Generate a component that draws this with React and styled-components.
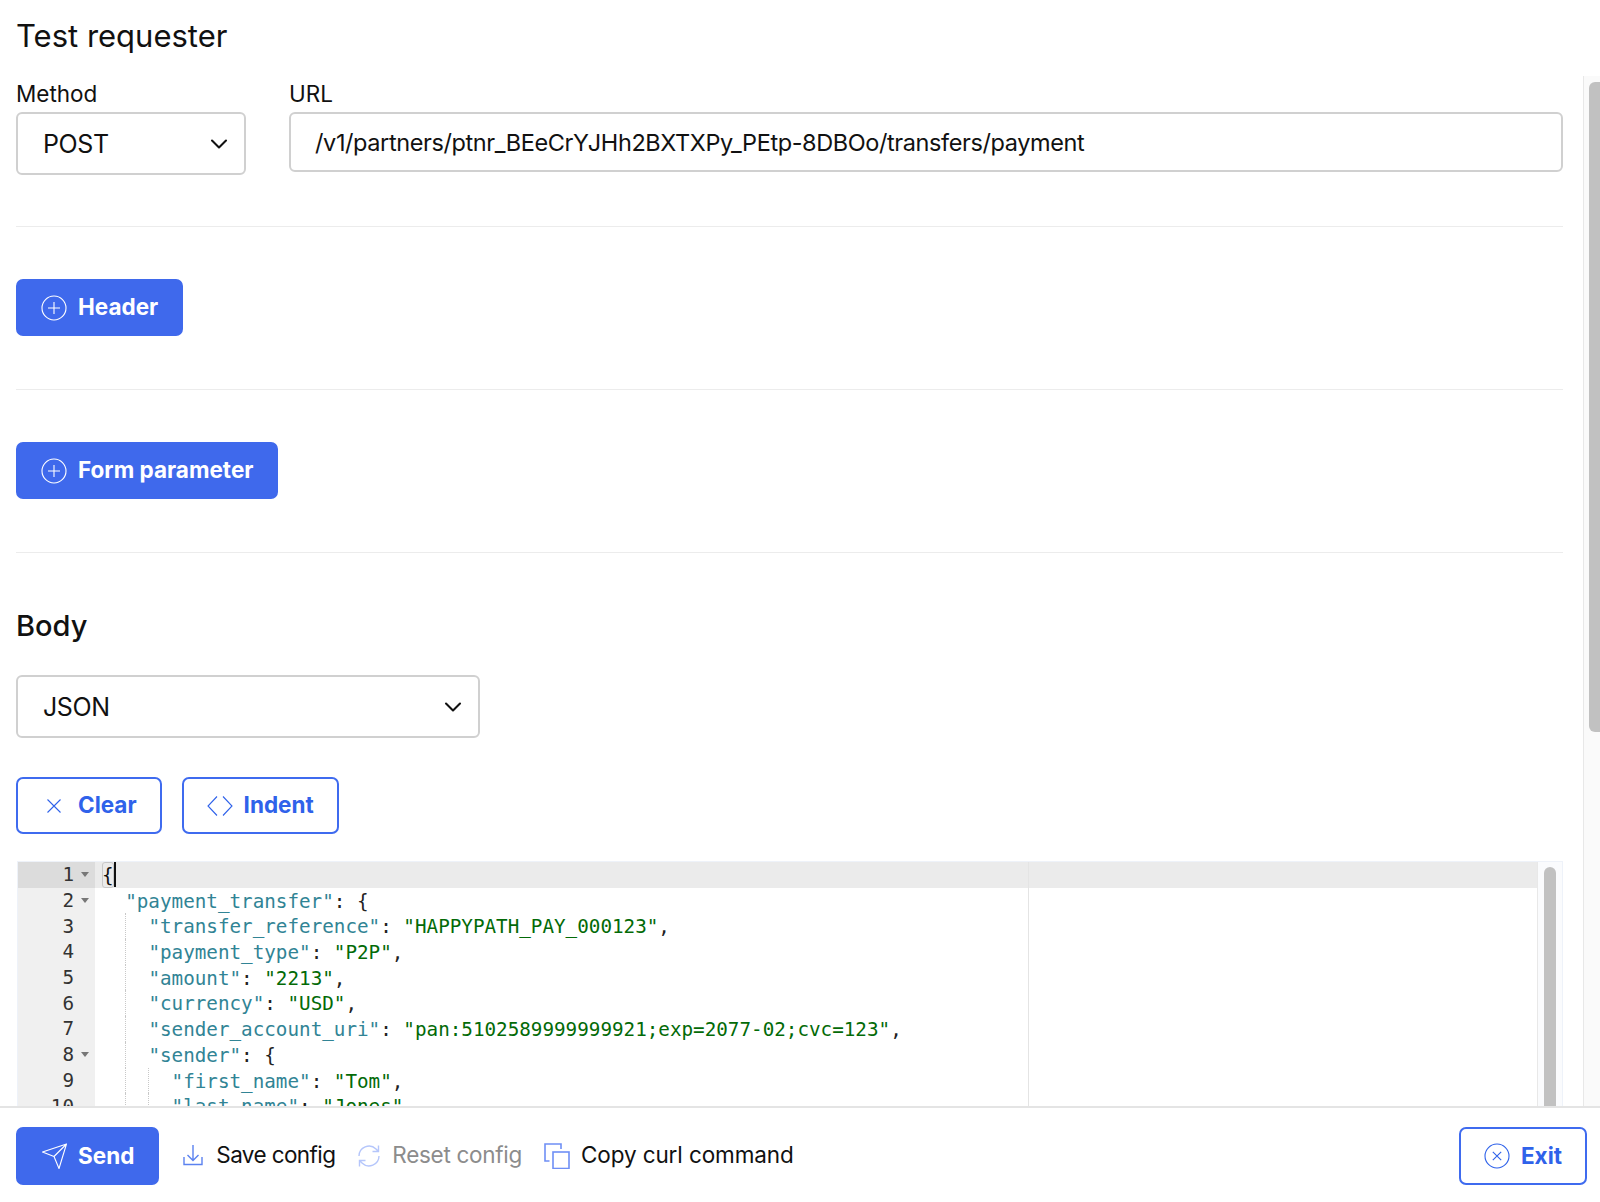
import React from 'react'
import styled, { createGlobalStyle } from 'styled-components'
import { ChevronDown } from 'lucide-react'

const GlobalStyle = createGlobalStyle`
  html, body {
    margin: 0;
    padding: 0;
    background: #fff;
    overflow: hidden;
  }
  * {
    box-sizing: border-box;
  }
`

const Page = styled.div`
  display: flex;
  flex-direction: column;
  width: 1600px;
  height: 1202px;
  overflow: hidden;
  font-family: 'Inter', 'Liberation Sans', sans-serif;
  color: #111;
`
const Title = styled.h1`
  height: 76px;
  margin: 0;
  padding: 17px 0 0 16px;
  font-size: 31px;
  line-height: 38px;
  font-weight: 400;
`
const Middle = styled.div`
  display: flex;
  flex: 1;
  min-height: 0;
`
const Content = styled.main`
  flex: 1;
  min-width: 0;
  overflow: hidden;
  padding: 0 20px 0 16px;
`
const PageScroll = styled.div`
  width: 17px;
  padding: 6px 0 0 5px;
  background: #fafafa;
  border-left: 1px solid #e8e8e8;
`
const PageThumb = styled.div`
  width: 11px;
  height: 650px;
  background: #c1c1c1;
  border-radius: 6px 0 0 6px;
`
const TopRow = styled.div`
  display: flex;
  gap: 43px;
`
const Field = styled.div`
  display: flex;
  flex-direction: column;
  flex: ${(p) => (p.$grow ? 1 : 'none')};
`
const Label = styled.label`
  height: 36px;
  padding-top: 4px;
  font-size: 22.5px;
  line-height: 28px;
`
const SelectBox = styled.div`
  display: flex;
  align-items: center;
  justify-content: space-between;
  width: ${(p) => p.$width}px;
  height: 63px;
  padding: 1px 11px 0 25px;
  border: 2px solid #d0d0d0;
  border-radius: 6px;
  font-size: 25px;
  letter-spacing: -0.4px;
`
const UrlInput = styled.div`
  display: flex;
  align-items: center;
  height: 60px;
  padding: 0 24px;
  border: 2px solid #d0d0d0;
  border-radius: 6px;
  font-size: 23.5px;
  letter-spacing: -0.4px;
`
const Divider = styled.hr`
  height: 1px;
  margin: ${(p) => p.$top}px 0 0;
  border: 0;
  background: #ececec;
`
const Button = styled.button`
  display: inline-flex;
  align-items: center;
  gap: 11px;
  height: 57px;
  padding: 0 23px 2px 23px;
  border: 2px solid ${(p) => (p.$outline ? '#3f6bef' : '#3f69ec')};
  border-radius: 7px;
  background: ${(p) => (p.$outline ? '#fff' : '#3f69ec')};
  color: ${(p) => (p.$outline ? '#2f62ea' : '#fff')};
  font-family: inherit;
  font-size: 22.5px;
  font-weight: 700;
  svg {
    position: relative;
    top: 1px;
  }
`
const FooterButton = styled(Button)`
  height: 58px;
  margin-top: 2px;
`
const AddBlock = styled.div`
  padding-top: 52px;
`
const BodyTitle = styled.h2`
  margin: 56px 0 0;
  font-size: 29px;
  line-height: 34px;
  font-weight: 500;
`
const BodySelect = styled.div`
  margin-top: 32px;
`
const EditorActions = styled.div`
  display: flex;
  gap: 20px;
  margin-top: 39px;
`
const Editor = styled.div`
  position: relative;
  display: flex;
  height: 320px;
  margin: 27px 0 0 1px;
  border: 1px solid #eef2f9;
  font-family: 'DejaVu Sans Mono', monospace;
  font-size: 19.26px;
  line-height: 27px;
  overflow: hidden;
`
const Gutter = styled.div`
  flex: none;
  width: 77px;
  background: #f0f0f0;
  color: #333;
`
const GutterCell = styled.div`
  display: flex;
  align-items: center;
  justify-content: flex-end;
  height: 25.7px;
  padding-right: 6px;
  background: ${(p) => (p.$active ? '#dcdcdc' : 'transparent')};
`
const FoldArrow = styled.span`
  width: 0;
  height: 0;
  margin-left: 7px;
  border-style: solid;
  border-width: 5px 4.5px 0;
  border-color: ${(p) => (p.$show ? '#777' : 'transparent')} transparent transparent;
`
const Lines = styled.div`
  position: relative;
  flex: 1;
  min-width: 0;
  padding-left: 7px;
`
const ActiveLine = styled.div`
  position: absolute;
  top: 0;
  left: 0;
  right: 0;
  height: 25.7px;
  background: #ebebeb;
`
const PrintMargin = styled.div`
  position: absolute;
  top: 0;
  bottom: 0;
  left: 933px;
  width: 1px;
  background: #e4e4e4;
`
const CodeLine = styled.div`
  position: relative;
  display: flex;
  height: 25.7px;
  white-space: pre;
`
const Indent = styled.span`
  display: inline-block;
  width: 23.2px;
  height: 25.7px;
  border-left: ${(p) => (p.$guide ? '1px dotted #c8c8c8' : '0')};
`
const Token = styled.span`
  color: ${(p) => ({ key: '#318495', str: '#036a07' }[p.$type] || '#222')};
`
const BracketBox = styled.span`
  height: 25.7px;
  outline: 1px solid #c8c8c8;
  outline-offset: -1px;
  border-radius: 3px;
`
const Caret = styled.span`
  display: inline-block;
  width: 2px;
  height: 25px;
  background: #111;
`
const EditorScroll = styled.div`
  flex: none;
  width: 25px;
  padding: 5px 6px 0 6px;
  background: #fafbfd;
  border-left: 1px solid #e8e8e8;
`
const EditorThumb = styled.div`
  height: 400px;
  background: #c1c1c1;
  border-radius: 6px;
`
const Footer = styled.footer`
  display: flex;
  align-items: center;
  height: 96px;
  padding: 0 13px 0 16px;
  background: #fff;
  border-top: 2px solid #e4e4e4;
`
const LinkButton = styled.span`
  display: inline-flex;
  align-items: center;
  gap: ${(p) => p.$gap}px;
  margin-left: ${(p) => p.$left}px;
  padding-bottom: 2px;
  font-size: 22.5px;
  letter-spacing: ${(p) => p.$tight}px;
  color: ${(p) => (p.$muted ? '#8c8c8c' : '#111')};
  svg {
    position: relative;
    top: 2px;
  }
`
const Spacer = styled.div`
  flex: 1;
`

const Icon = ({ color = 'currentColor', width = 1.1, children }) => (
  <svg width="26" height="26" viewBox="0 0 26 26" fill="none" stroke={color} strokeWidth={width}>
    {children}
  </svg>
)
const PlusCircle = () => (
  <Icon>
    <circle cx="13" cy="13" r="12" />
    <path d="M13 7v12M7 13h12" />
  </Icon>
)
const CrossCircle = () => (
  <Icon>
    <circle cx="13" cy="13" r="12" />
    <path d="M8.800 8.800l8.400 8.400M17.200 8.800l-8.400 8.400" />
  </Icon>
)
const Cross = () => (
  <Icon>
    <path d="M6.500 6.500l13 13M19.500 6.500l-13 13" />
  </Icon>
)
const Code = () => (
  <Icon>
    <path d="M10 3.500L1 13l9 9.500M16 3.500L25 13l-9 9.500" />
  </Icon>
)
const Plane = () => (
  <Icon>
    <path d="M25.500 1L1.500 9L13 13.500L18 25.500ZM25.500 1L13 13.500" strokeLinejoin="round" />
  </Icon>
)
const Download = () => (
  <Icon color="#5b82f0" width={1.4}>
    <path d="M13 2v15.500M7.500 12l5.500 5.500 5.500-5.500M4 14v7.500h18V14" />
  </Icon>
)
const Reset = () => (
  <Icon color="#b5c6fb" width={1.4}>
    <path d="M3 13a10 10 0 0 1 17-7l2 2M22.500 2.500v6h-6M23 13a10 10 0 0 1-17 7l-2-2M3.500 23.500v-6h6" />
  </Icon>
)
const Copy = () => (
  <Icon color="#6f8ff5" width={1.6}>
    <path d="M17 6V1H1v17h4.500" />
    <rect x="9" y="9" width="16" height="16.500" />
  </Icon>
)

const k = (text) => ({ type: 'key', text })
const s = (text) => ({ type: 'str', text })
const t = (text) => ({ type: 'text', text })

const code = [
  { level: 0, fold: true, tokens: [] },
  { level: 1, fold: true, tokens: [k('"payment_transfer"'), t(': {')] },
  { level: 2, tokens: [k('"transfer_reference"'), t(': '), s('"HAPPYPATH_PAY_000123"'), t(',')] },
  { level: 2, tokens: [k('"payment_type"'), t(': '), s('"P2P"'), t(',')] },
  { level: 2, tokens: [k('"amount"'), t(': '), s('"2213"'), t(',')] },
  { level: 2, tokens: [k('"currency"'), t(': '), s('"USD"'), t(',')] },
  { level: 2, tokens: [k('"sender_account_uri"'), t(': '), s('"pan:5102589999999921;exp=2077-02;cvc=123"'), t(',')] },
  { level: 2, fold: true, tokens: [k('"sender"'), t(': {')] },
  { level: 3, tokens: [k('"first_name"'), t(': '), s('"Tom"'), t(',')] },
  { level: 3, tokens: [k('"last_name"'), t(': '), s('"Jones"'), t(',')] },
]

export default function App() {
  return (
    <Page>
      <GlobalStyle />
      <Title>Test requester</Title>
      <Middle>
        <Content>
          <TopRow>
            <Field>
              <Label>Method</Label>
              <SelectBox $width={230}>
                POST
                <ChevronDown size={28} strokeWidth={1.8} />
              </SelectBox>
            </Field>
            <Field $grow>
              <Label>URL</Label>
              <UrlInput>/v1/partners/ptnr_BEeCrYJHh2BXTXPy_PEtp-8DBOo/transfers/payment</UrlInput>
            </Field>
          </TopRow>
          <Divider $top={51} />
          <AddBlock>
            <Button>
              <PlusCircle />
              Header
            </Button>
          </AddBlock>
          <Divider $top={53} />
          <AddBlock>
            <Button>
              <PlusCircle />
              Form parameter
            </Button>
          </AddBlock>
          <Divider $top={53} />
          <BodyTitle>Body</BodyTitle>
          <BodySelect>
            <SelectBox $width={464}>
              JSON
              <ChevronDown size={28} strokeWidth={1.8} />
            </SelectBox>
          </BodySelect>
          <EditorActions>
            <Button $outline>
              <Cross />
              Clear
            </Button>
            <Button $outline>
              <Code />
              Indent
            </Button>
          </EditorActions>
          <Editor>
            <Gutter>
              {code.map((line, i) => (
                <GutterCell key={i} $active={i === 0}>
                  {i + 1}
                  <FoldArrow $show={line.fold} />
                </GutterCell>
              ))}
            </Gutter>
            <Lines>
              <ActiveLine />
              <PrintMargin />
              {code.map((line, i) => (
                <CodeLine key={i}>
                  {Array.from({ length: line.level }).map((_, n) => (
                    <Indent key={n} $guide={n > 0} />
                  ))}
                  {i === 0 && (
                    <>
                      <BracketBox>{'{'}</BracketBox>
                      <Caret />
                    </>
                  )}
                  {line.tokens.map((token, n) => (
                    <Token key={n} $type={token.type}>
                      {token.text}
                    </Token>
                  ))}
                </CodeLine>
              ))}
            </Lines>
            <EditorScroll>
              <EditorThumb />
            </EditorScroll>
          </Editor>
        </Content>
        <PageScroll>
          <PageThumb />
        </PageScroll>
      </Middle>
      <Footer>
        <FooterButton>
          <Plane />
          Send
        </FooterButton>
        <LinkButton $left={21} $gap={10} $tight={-0.6}>
          <Download />
          Save config
        </LinkButton>
        <LinkButton $left={21} $gap={10} $tight={-0.3} $muted>
          <Reset />
          Reset config
        </LinkButton>
        <LinkButton $left={22} $gap={11} $tight={-0.1}>
          <Copy />
          Copy curl command
        </LinkButton>
        <Spacer />
        <FooterButton $outline>
          <CrossCircle />
          Exit
        </FooterButton>
      </Footer>
    </Page>
  )
}
